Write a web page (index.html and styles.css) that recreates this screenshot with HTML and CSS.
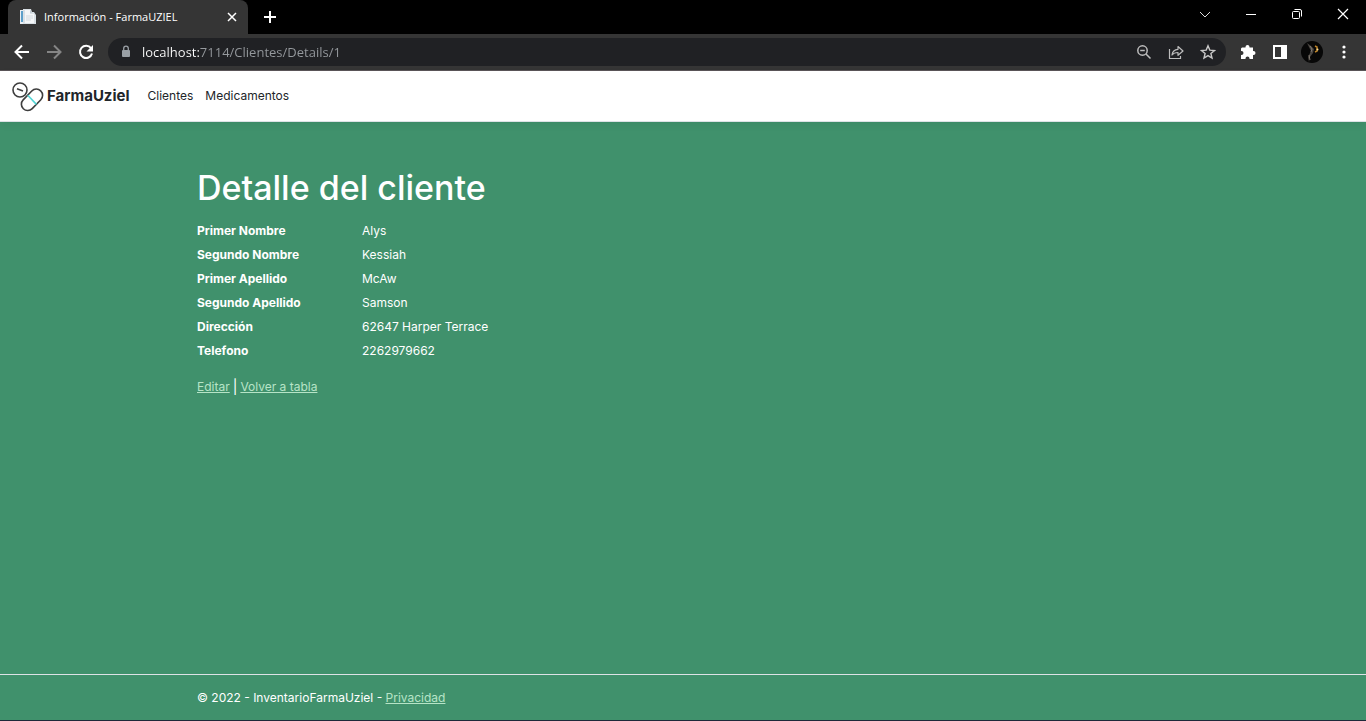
FILE: index.html
```html
<!DOCTYPE html>
<html lang="es">
<head>
<meta charset="utf-8">
<meta name="viewport" content="width=device-width, initial-scale=1">
<title>Información - FarmaUZIEL</title>
<link rel="stylesheet" href="styles.css">
</head>
<body>
<div class="browser">
  <div class="tab-strip">
    <div class="tab">
      <svg class="tab-icon" width="16" height="16" viewBox="0 0 16 16"><path d="M0 1h5v14H0z" fill="#e8edf2"/><path d="M1 2h2v11H1z" fill="#5c9fc9"/><path d="M3 0h8l1 3h2l2 3v9H3z" fill="#d9e0e5"/><path d="M5 1h5v4h4v9H5z" fill="#f4f6f8"/><path d="M10 1l2 3h-2z" fill="#bfc9d1"/><path d="M6 7h7M6 9h7M6 11h5" stroke="#d2d9de"/></svg>
      <span class="tab-title">Información - FarmaUZIEL</span>
      <button class="icon-button tab-close" aria-label="Cerrar pestaña"><svg width="10" height="10" viewBox="0 0 10 10"><path d="M1 1l8 8M9 1L1 9" stroke="#fff" stroke-width="1.5"/></svg></button>
    </div>
    <button class="icon-button new-tab" aria-label="Nueva pestaña"><svg width="12" height="12" viewBox="0 0 12 12"><path d="M6 0v12M0 6h12" stroke="#fff" stroke-width="2"/></svg></button>
    <div class="window-controls">
      <button class="icon-button" aria-label="Buscar pestañas"><svg width="12" height="12" viewBox="0 0 12 12" fill="none"><path d="M1 4l5 5 5-5" stroke="#ddd"/></svg></button>
      <button class="icon-button" aria-label="Minimizar"><svg width="12" height="12" viewBox="0 0 12 12"><path d="M1 6.5h10" stroke="#fff"/></svg></button>
      <button class="icon-button" aria-label="Restaurar"><svg width="12" height="12" viewBox="0 0 12 12" fill="none" stroke="#fff"><rect x="1.5" y="3.5" width="7" height="7" rx="1"/><path d="M3.5 1.5H9a1.500 1.500 0 0 1 1.500 1.500V8.500"/></svg></button>
      <button class="icon-button" aria-label="Cerrar"><svg width="12" height="12" viewBox="0 0 12 12"><path d="M1 1l10 10M11 1L1 11" stroke="#fff" stroke-width="1.200"/></svg></button>
    </div>
  </div>
  <div class="toolbar">
    <button class="icon-button tool" aria-label="Atrás"><svg width="16" height="16" viewBox="0 0 16 16" fill="none" stroke="#fff" stroke-width="2"><path d="M15 8H2M8 1.500L1.500 8 8 14.500"/></svg></button>
    <button class="icon-button tool" aria-label="Adelante"><svg width="16" height="16" viewBox="0 0 16 16" fill="none" stroke="#858585" stroke-width="2"><path d="M1 8h13M8 1.500L14.500 8 8 14.500"/></svg></button>
    <button class="icon-button tool" aria-label="Recargar"><svg width="16" height="16" viewBox="0 0 16 16"><path d="M13 4.200A6.100 6.100 0 1 0 14 9.500" fill="none" stroke="#fff" stroke-width="2"/><path d="M15 1v6.500H8.500z" fill="#fff"/></svg></button>
    <div class="address-bar">
      <svg class="lock" width="10" height="14" viewBox="0 0 10 14"><rect x="1" y="5" width="8" height="7" rx="1" fill="#9aa0a6"/><path d="M2.700 6V3.500a2.300 2.300 0 0 1 4.600 0V6" fill="none" stroke="#9aa0a6" stroke-width="1.300"/></svg>
      <input class="address" type="text" aria-label="Dirección web" value="localhost:7114/Clientes/Details/1">
      <button class="icon-button tool" aria-label="Zoom"><svg width="16" height="16" viewBox="0 0 16 16" fill="none" stroke="#bdbdbd" stroke-width="1.500"><circle cx="6.500" cy="6.500" r="4.700"/><path d="M10 10l4.500 4.500M4.200 6.500h4.600"/></svg></button>
      <button class="icon-button tool" aria-label="Compartir"><svg width="16" height="16" viewBox="0 0 16 16" fill="none" stroke="#bdbdbd" stroke-width="1.200"><path d="M1.500 5v9.500h11V12"/><path d="M4 11c.5-4 2.500-5.500 6-5.700V2.500L15 7l-5 4.300V8.500C7.500 8.500 5.500 9 4 11z" stroke-linejoin="round"/></svg></button>
      <button class="icon-button tool" aria-label="Marcador"><svg width="16" height="16" viewBox="0 0 16 16" fill="none" stroke="#c8c8c8" stroke-width="1.400"><path d="M8 1.800l1.800 4.300 4.700.4-3.600 3 1.100 4.600-4-2.500-4 2.500 1.100-4.600-3.600-3 4.700-.4z"/></svg></button>
    </div>
    <button class="icon-button tool" aria-label="Extensiones"><svg width="16" height="16" viewBox="0 0 16 16" fill="#fff"><path d="M2 3.500h3.500V3a2 2 0 0 1 4 0v.5H13V7h.5a2 2 0 0 1 0 4H13v4H9.500v-.5a2 2 0 0 0-4 0v.5H1v-4h.5a2 2 0 0 0 0-4H1V4.500z"/></svg></button>
    <button class="icon-button tool" aria-label="Panel lateral"><svg width="16" height="16" viewBox="0 0 16 16"><path d="M1 1h14v14H1zM3 3v10h6V3z" fill="#fff" fill-rule="evenodd"/></svg></button>
    <button class="icon-button tool" aria-label="Perfil"><svg width="22" height="22" viewBox="0 0 22 22"><circle cx="11" cy="11" r="11" fill="#070707"/><path d="M6 2l4 3 3 3-1 4-3 4-1 5-1-5 3-6-2-4z" fill="#494541"/><path d="M9 5l2 3-1 3M8 14l1 5" stroke="#807971" fill="none"/><path d="M14 5l2 1v4l-2 1" stroke="#bc8329" stroke-width="1.500" fill="none"/><circle cx="16.500" cy="8.500" r="1" fill="#ffe296"/></svg></button>
    <button class="icon-button tool" aria-label="Menú"><svg width="4" height="14" viewBox="0 0 4 14" fill="#fff"><circle cx="2" cy="2" r="1.600"/><circle cx="2" cy="7" r="1.600"/><circle cx="2" cy="12" r="1.600"/></svg></button>
  </div>
</div>
<header class="site-header">
  <a class="brand" href="#">
    <svg width="34" height="32" viewBox="0 -2 34 32" fill="none" stroke="#3e3e3e" stroke-width="1.600"><circle cx="8" cy="8" r="7"/><path d="M5 6.800l6 2.200"/><rect x="7.500" y="11.500" width="25" height="12.600" rx="6.300" transform="rotate(-46 20 17.800)"/><path d="M15.800 13.200l8.600 9.200" stroke="#52d5d5"/></svg>
    <span>FarmaUziel</span>
  </a>
  <nav class="nav">
    <a href="#">Clientes</a>
    <a href="#">Medicamentos</a>
  </nav>
</header>
<main class="container content">
  <h1>Detalle del cliente</h1>
  <dl class="details">
    <dt>Primer Nombre</dt><dd>Alys</dd>
    <dt>Segundo Nombre</dt><dd>Kessiah</dd>
    <dt>Primer Apellido</dt><dd>McAw</dd>
    <dt>Segundo Apellido</dt><dd>Samson</dd>
    <dt>Dirección</dt><dd>62647 Harper Terrace</dd>
    <dt>Telefono</dt><dd>2262979662</dd>
  </dl>
  <div class="actions"><a href="#">Editar</a><span class="divider">|</span><a href="#">Volver a tabla</a></div>
</main>
<footer class="site-footer">
  <div class="container">© 2022 - InventarioFarmaUziel - <a href="#">Privacidad</a></div>
</footer>
</body>
</html>
```
FILE: styles.css
```css
* { box-sizing: border-box; }
body {
  margin: 0;
  min-height: 100vh;
  display: flex;
  flex-direction: column;
  background: #40916c;
  color: #fff;
  font: 400 12px/18px Inter, "Liberation Sans", sans-serif;
}
.icon-button {
  display: flex;
  align-items: center;
  justify-content: center;
  padding: 0;
  border: 0;
  background: none;
}
.browser { font-family: "Open Sans", "Noto Sans", sans-serif; }
.tab-strip {
  display: flex;
  height: 34px;
  padding-left: 8px;
  background: #000;
}
.tab {
  display: flex;
  align-items: center;
  width: 240px;
  padding: 0 8px 0 12px;
  border-radius: 8px 8px 0 0;
  background: #353535;
}
.tab-title { flex: 1; margin-left: 8px; font-size: 11px; white-space: nowrap; }
.tab-close { width: 16px; height: 16px; }
.new-tab { width: 44px; }
.window-controls { display: flex; margin-left: auto; padding-bottom: 6px; }
.window-controls .icon-button { width: 46px; }
.toolbar {
  display: flex;
  align-items: center;
  height: 37px;
  padding: 0 6px;
  border-bottom: 1px solid #5a5558;
  background: #353535;
}
.tool { width: 32px; height: 28px; flex: none; }
.address-bar {
  display: flex;
  flex: 1;
  align-items: center;
  height: 28px;
  margin: 0 6px;
  padding: 0 2px 0 13px;
  border-radius: 14px;
  background: #202124;
}
.address {
  flex: 1;
  min-width: 0;
  margin-left: 11px;
  padding: 0;
  border: 0;
  outline: 0;
  background: linear-gradient(90deg, #fff 57px, #969a9e 57px);
  background-clip: text;
  -webkit-background-clip: text;
  -webkit-text-fill-color: transparent;
  font: 13px/20px "Open Sans", "Noto Sans", sans-serif;
}
.site-header {
  display: flex;
  align-items: center;
  gap: 12px;
  height: 51px;
  padding: 0 12px;
  border-bottom: 1px solid #dee2e6;
  background: #fff;
  box-shadow: 0 3px 8px rgba(0, 0, 0, .05);
}
.site-header a { color: #212529; text-decoration: none; }
.site-header .brand { display: flex; align-items: center; gap: 1px; font-size: 15px; font-weight: 700; }
.nav { display: flex; }
.nav a { padding: 6px; }
.container { width: 100%; max-width: 990px; margin: 0 auto; padding: 0 9px; }
.content { flex: 1; padding-top: 44px; }
h1 { margin: 0 0 10px; font-size: 34px; line-height: 43px; font-weight: 500; }
.details {
  display: grid;
  grid-template-columns: 1fr 5fr;
  margin: 0 -9px 15px;
}
.details dt, .details dd { margin: 0; padding: 3px 9px; }
.details dt { font-weight: 700; }
.actions { display: flex; gap: 3px; }
.divider { font-size: 14px; }
.actions a, .site-footer a { color: #b7e4c7; }
.site-footer {
  padding: 14px 0 13px;
  border-top: 1px solid #dee2e6;
  border-bottom: 1px solid #1d2939;
}
```
